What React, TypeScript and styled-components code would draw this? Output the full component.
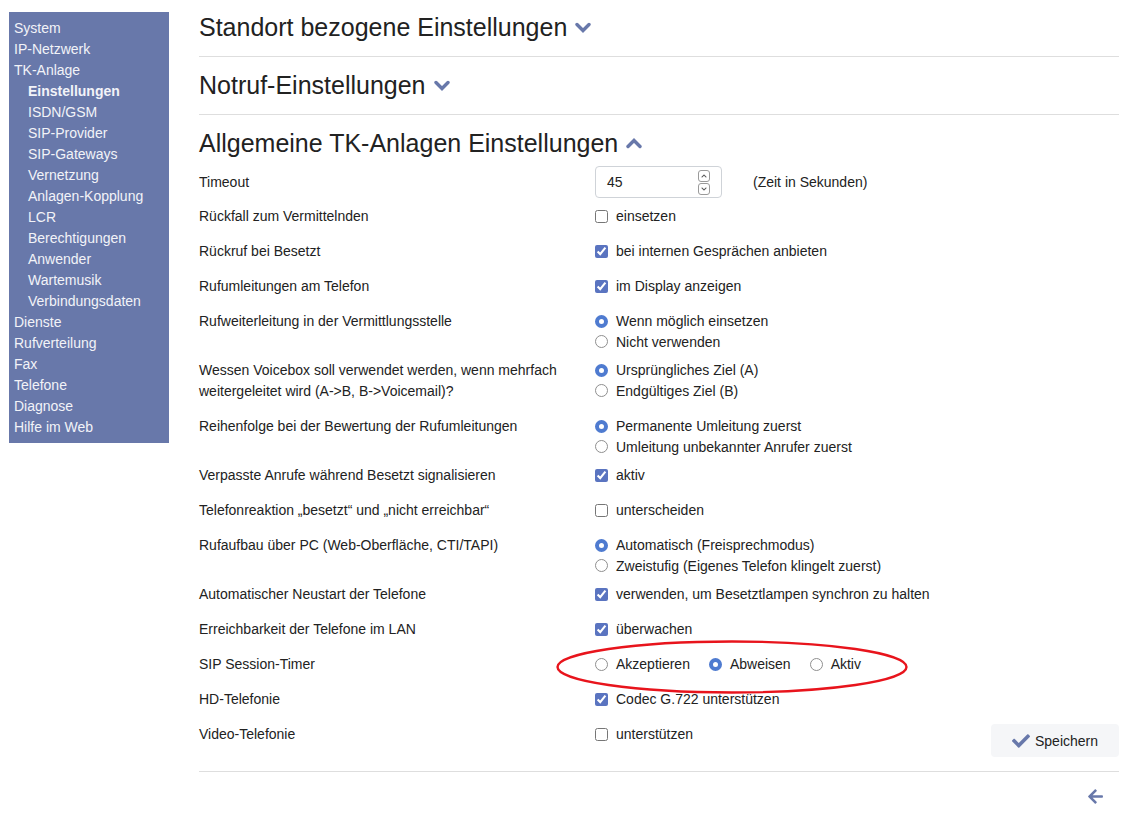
import React from 'react';
import styled, { createGlobalStyle } from 'styled-components';
import { FaCheck, FaArrowLeft, FaChevronDown, FaChevronUp } from 'react-icons/fa';

const accent = '#6878aa';

const GlobalStyle = createGlobalStyle`
  body {
    margin: 0;
    font-family: "Liberation Sans", Arial, sans-serif;
    font-size: 14px;
    color: #222;
    background: #fff;
  }
`;

const Page = styled.div`
  display: flex;
  align-items: flex-start;
`;

const Sidebar = styled.nav`
  margin: 12px 0 0 9px;
  width: 160px;
  padding: 6px 5px 5px;
  box-sizing: border-box;
  background-color: ${accent};
`;

const NavItem = styled.div<{ $level: number; $active?: boolean }>`
  line-height: 21px;
  padding-left: ${({ $level }) => $level * 14}px;
  color: #f2f3f8;
  font-weight: ${({ $active }) => ($active ? 700 : 400)};
  white-space: nowrap;
`;

const Main = styled.main`
  margin-left: 30px;
  width: 920px;
  position: relative;
`;

const Section = styled.section`
  border-bottom: 1px solid #dedede;
  padding-bottom: 10px;

  &:first-child h2 {
    padding-top: 8px;
  }
`;

const Heading = styled.h2`
  margin: 0;
  padding-top: 9px;
  font-size: 25px;
  line-height: 38px;
  font-weight: 400;
  color: #222;
  display: flex;
  align-items: center;
  gap: 8px;
`;

const Toggle = styled.svg`
  color: ${accent};
  margin-top: 1px;
`;

const Row = styled.div<{ $center?: boolean }>`
  display: grid;
  grid-template-columns: 396px 1fr auto;
  align-items: ${({ $center }) => ($center ? 'center' : 'start')};
  padding: 4px 0;
`;

const Label = styled.div<{ $center?: boolean }>`
  line-height: 21px;
  padding-bottom: ${({ $center }) => ($center ? 0 : 6)}px;
  padding-right: 20px;
`;

const Control = styled.div<{ $inline?: boolean }>`
  min-height: 27px;
  display: flex;
  flex-direction: ${({ $inline }) => ($inline ? 'row' : 'column')};
  align-items: flex-start;
  gap: ${({ $inline }) => ($inline ? 19 : 0)}px;
  position: relative;
`;

const Option = styled.label<{ $tight?: boolean }>`
  display: flex;
  align-items: center;
  gap: 8px;
  line-height: ${({ $tight }) => ($tight ? 20.5 : 21)}px;
  cursor: pointer;
  white-space: nowrap;
`;

const Input = styled.input`
  margin: 0;
  width: 13px;
  height: 13px;
  accent-color: #5a74c0;
`;

const Radio = styled.input`
  appearance: none;
  margin: 0;
  width: 13px;
  height: 13px;
  box-sizing: border-box;
  border-radius: 50%;
  border: 1px solid #8f8f8f;
  background: #fff;

  &:checked {
    border: 4px solid #4f7bd0;
  }
`;

const NumberWrap = styled.div`
  display: flex;
  align-items: center;
  gap: 31px;
`;

const NumberBox = styled.div`
  width: 127px;
  height: 32px;
  box-sizing: border-box;
  border: 1px solid #cfd3d8;
  border-radius: 4px;
  display: flex;
  align-items: center;
  justify-content: space-between;
  padding: 0 11px 0 11px;
`;

const Spinner = styled.div`
  display: flex;
  flex-direction: column;
  gap: 1px;
`;

const SpinButton = styled.span`
  width: 10px;
  height: 10px;
  border: 1px solid #9a9a9a;
  border-radius: 3px;
  display: flex;
  align-items: center;
  justify-content: center;
  color: #555;
  font-size: 6px;
`;

const SaveButton = styled.button`
  height: 33px;
  width: 128px;
  border: none;
  border-radius: 4px;
  background: #f5f6f8;
  font-family: inherit;
  font-size: 14px;
  color: #222;
  display: flex;
  align-items: center;
  justify-content: center;
  gap: 5px;
  cursor: pointer;

  svg {
    color: ${accent};
  }
`;

const Footer = styled.div`
  display: flex;
  justify-content: flex-end;
  padding: 16px 15px 0 0;
  color: ${accent};
`;

const Marker = styled.svg`
  position: absolute;
  left: -39px;
  top: -14px;
  pointer-events: none;
  overflow: visible;
`;

const nav: Array<[string, number, boolean?]> = [
  ['System', 0],
  ['IP-Netzwerk', 0],
  ['TK-Anlage', 0],
  ['Einstellungen', 1, true],
  ['ISDN/GSM', 1],
  ['SIP-Provider', 1],
  ['SIP-Gateways', 1],
  ['Vernetzung', 1],
  ['Anlagen-Kopplung', 1],
  ['LCR', 1],
  ['Berechtigungen', 1],
  ['Anwender', 1],
  ['Wartemusik', 1],
  ['Verbindungsdaten', 1],
  ['Dienste', 0],
  ['Rufverteilung', 0],
  ['Fax', 0],
  ['Telefone', 0],
  ['Diagnose', 0],
  ['Hilfe im Web', 0],
];

// bold chevron next to the collapsible headings
const Chevron: React.FC<{ up?: boolean }> = ({ up }) => (
  <Toggle width="16" height="11" viewBox="0 0 16 11">
    <polyline
      points={up ? '2,8.5 8,2.5 14,8.5' : '2,2.5 8,8.5 14,2.5'}
      fill="none"
      stroke="currentColor"
      strokeWidth="3.4"
      strokeLinecap="round"
      strokeLinejoin="miter"
    />
  </Toggle>
);

const Checkbox: React.FC<{ label: string; checked?: boolean }> = ({ label, checked }) => (
  <Control>
    <Option>
      <Input type="checkbox" defaultChecked={checked} />
      {label}
    </Option>
  </Control>
);

const Radios: React.FC<{ name: string; options: string[]; value: number; inline?: boolean }> = ({
  name,
  options,
  value,
  inline,
}) => (
  <Control $inline={inline}>
    {options.map((o, i) => (
      <Option key={o} $tight>
        <Radio type="radio" name={name} defaultChecked={i === value} />
        {o}
      </Option>
    ))}
  </Control>
);

const App: React.FC = () => (
  <>
    <GlobalStyle />
    <Page>
      <Sidebar>
        {nav.map(([text, level, active]) => (
          <NavItem key={text} $level={level} $active={active}>
            {text}
          </NavItem>
        ))}
      </Sidebar>
      <Main>
        <Section>
          <Heading>
            Standort bezogene Einstellungen
            <Chevron />
          </Heading>
        </Section>
        <Section>
          <Heading>
            Notruf-Einstellungen
            <Chevron />
          </Heading>
        </Section>
        <Section>
          <Heading>
            Allgemeine TK-Anlagen Einstellungen
            <Chevron up />
          </Heading>

          <Row $center>
            <Label $center>Timeout</Label>
            <NumberWrap>
              <NumberBox>
                <span>45</span>
                <Spinner>
                  <SpinButton><FaChevronUp /></SpinButton>
                  <SpinButton><FaChevronDown /></SpinButton>
                </Spinner>
              </NumberBox>
              <span>(Zeit in Sekunden)</span>
            </NumberWrap>
          </Row>
          <Row>
            <Label>Rückfall zum Vermittelnden</Label>
            <Checkbox label="einsetzen" />
          </Row>
          <Row>
            <Label>Rückruf bei Besetzt</Label>
            <Checkbox label="bei internen Gesprächen anbieten" checked />
          </Row>
          <Row>
            <Label>Rufumleitungen am Telefon</Label>
            <Checkbox label="im Display anzeigen" checked />
          </Row>
          <Row>
            <Label>Rufweiterleitung in der Vermittlungsstelle</Label>
            <Radios name="fwd" value={0} options={['Wenn möglich einsetzen', 'Nicht verwenden']} />
          </Row>
          <Row>
            <Label>
              Wessen Voicebox soll verwendet werden, wenn mehrfach weitergeleitet wird (A-&gt;B,
              B-&gt;Voicemail)?
            </Label>
            <Radios name="vb" value={0} options={['Ursprüngliches Ziel (A)', 'Endgültiges Ziel (B)']} />
          </Row>
          <Row>
            <Label>Reihenfolge bei der Bewertung der Rufumleitungen</Label>
            <Radios
              name="order"
              value={0}
              options={['Permanente Umleitung zuerst', 'Umleitung unbekannter Anrufer zuerst']}
            />
          </Row>
          <Row>
            <Label>Verpasste Anrufe während Besetzt signalisieren</Label>
            <Checkbox label="aktiv" checked />
          </Row>
          <Row>
            <Label>Telefonreaktion „besetzt“ und „nicht erreichbar“</Label>
            <Checkbox label="unterscheiden" />
          </Row>
          <Row>
            <Label>Rufaufbau über PC (Web-Oberfläche, CTI/TAPI)</Label>
            <Radios
              name="pc"
              value={0}
              options={['Automatisch (Freisprechmodus)', 'Zweistufig (Eigenes Telefon klingelt zuerst)']}
            />
          </Row>
          <Row>
            <Label>Automatischer Neustart der Telefone</Label>
            <Checkbox label="verwenden, um Besetztlampen synchron zu halten" checked />
          </Row>
          <Row>
            <Label>Erreichbarkeit der Telefone im LAN</Label>
            <Checkbox label="überwachen" checked />
          </Row>
          <Row>
            <Label>SIP Session-Timer</Label>
            <Control>
              <Radios name="sip" value={1} inline options={['Akzeptieren', 'Abweisen', 'Aktiv']} />
              <Marker width="352" height="54" viewBox="0 0 352 54">
                <ellipse cx="176" cy="27" rx="174.5" ry="25.5" fill="none" stroke="#e8141c" strokeWidth="2.4" />
              </Marker>
            </Control>
          </Row>
          <Row>
            <Label>HD-Telefonie</Label>
            <Checkbox label="Codec G.722 unterstützen" checked />
          </Row>
          <Row>
            <Label>Video-Telefonie</Label>
            <Checkbox label="unterstützen" />
            <SaveButton type="button">
              <FaCheck size={18} />
              Speichern
            </SaveButton>
          </Row>
        </Section>
        <Footer>
          <FaArrowLeft size={17} />
        </Footer>
      </Main>
    </Page>
  </>
);

export default App;
